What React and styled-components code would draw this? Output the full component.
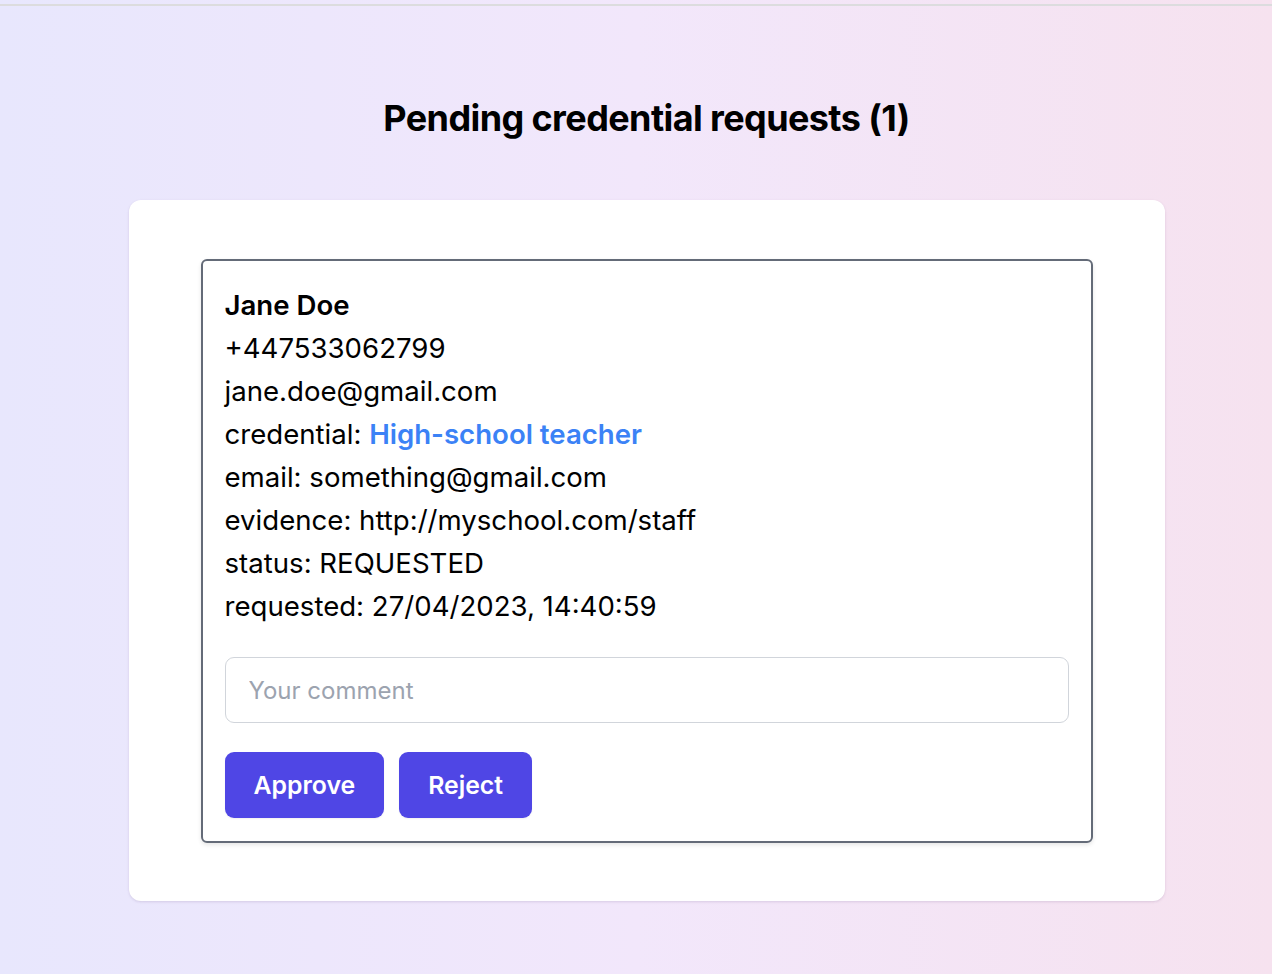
import styled, { createGlobalStyle } from 'styled-components'

const GlobalStyle = createGlobalStyle`
    html, body {
        margin: 0;
        padding: 0;
    }

    body {
        font-family: Inter, "Noto Sans", "Liberation Sans", sans-serif;
        color: #000;
    }

    * {
        box-sizing: border-box;
    }
`

const request = {
    name: 'Jane Doe',
    phone: '+447533062799',
    email: 'jane.doe@gmail.com',
    credential: 'High-school teacher',
    credentialEmail: 'something@gmail.com',
    evidence: 'http://myschool.com/staff',
    status: 'REQUESTED',
    requested: '27/04/2023, 14:40:59',
}

const App = () => (
    <Page>
        <GlobalStyle />
        <TopRule />
        <Main>
            <Heading>Pending credential requests (1)</Heading>
            <Card>
                <RequestBox>
                    <Name>{request.name}</Name>
                    <Line>{request.phone}</Line>
                    <Line>{request.email}</Line>
                    <Line>
                        credential: <CredentialLink href="#">{request.credential}</CredentialLink>
                    </Line>
                    <Line>email: {request.credentialEmail}</Line>
                    <Line>evidence: {request.evidence}</Line>
                    <Line>status: {request.status}</Line>
                    <Line>requested: {request.requested}</Line>

                    <CommentInput placeholder="Your comment" />

                    <Actions>
                        <ActionButton>Approve</ActionButton>
                        <ActionButton>Reject</ActionButton>
                    </Actions>
                </RequestBox>
            </Card>
        </Main>
    </Page>
)

const Page = styled.div`
    min-height: 974px;
    padding-top: 4px;
    background: linear-gradient(90deg, #e8e7fd 0%, #f2e7fb 50%, #f6e2ef 100%);
`

const TopRule = styled.div`
    height: 2px;
    background: #dcdcde;
`

const Main = styled.main`
    display: flex;
    flex-direction: column;
    align-items: center;
    padding: 85px 0 0 21px;
`

const Heading = styled.h1`
    margin: 0 0 55px;
    font-size: 36px;
    line-height: 54px;
    font-weight: 700;
    letter-spacing: -0.6px;
`

const Card = styled.section`
    width: 1036px;
    padding: 59px 72px 58px;
    background: #fff;
    border-radius: 12px;
    box-shadow: 0 1px 3px rgba(120, 90, 140, 0.12), 0 1px 2px rgba(120, 90, 140, 0.08);
`

const RequestBox = styled.div`
    display: flex;
    flex-direction: column;
    padding: 23px 22px 23px;
    border: 2px solid #646b78;
    border-radius: 6px;
    box-shadow: 0 2px 4px rgba(0, 0, 0, 0.1);
`

const Line = styled.div`
    font-size: 27.6px;
    line-height: 43px;
`

const Name = styled(Line)`
    font-weight: 600;
`

const CredentialLink = styled.a`
    color: #3b82f6;
    font-weight: 600;
    text-decoration: none;
`

const CommentInput = styled.input`
    margin-top: 29px;
    height: 66px;
    padding: 0 23px;
    border: 1px solid #d1d5db;
    border-radius: 9px;
    font-family: inherit;
    font-size: 24px;
    color: #111827;
    outline: none;

    &::placeholder {
        color: #9ca3af;
    }
`

const Actions = styled.div`
    display: flex;
    gap: 15px;
    margin-top: 29px;
`

const ActionButton = styled.button`
    height: 66px;
    padding: 0 29px;
    border: none;
    border-radius: 9px;
    background: #4f46e5;
    color: #fff;
    font-family: inherit;
    font-size: 24.8px;
    font-weight: 600;
    box-shadow: 0 1px 2px rgba(0, 0, 0, 0.06);
    cursor: pointer;
`

export default App
